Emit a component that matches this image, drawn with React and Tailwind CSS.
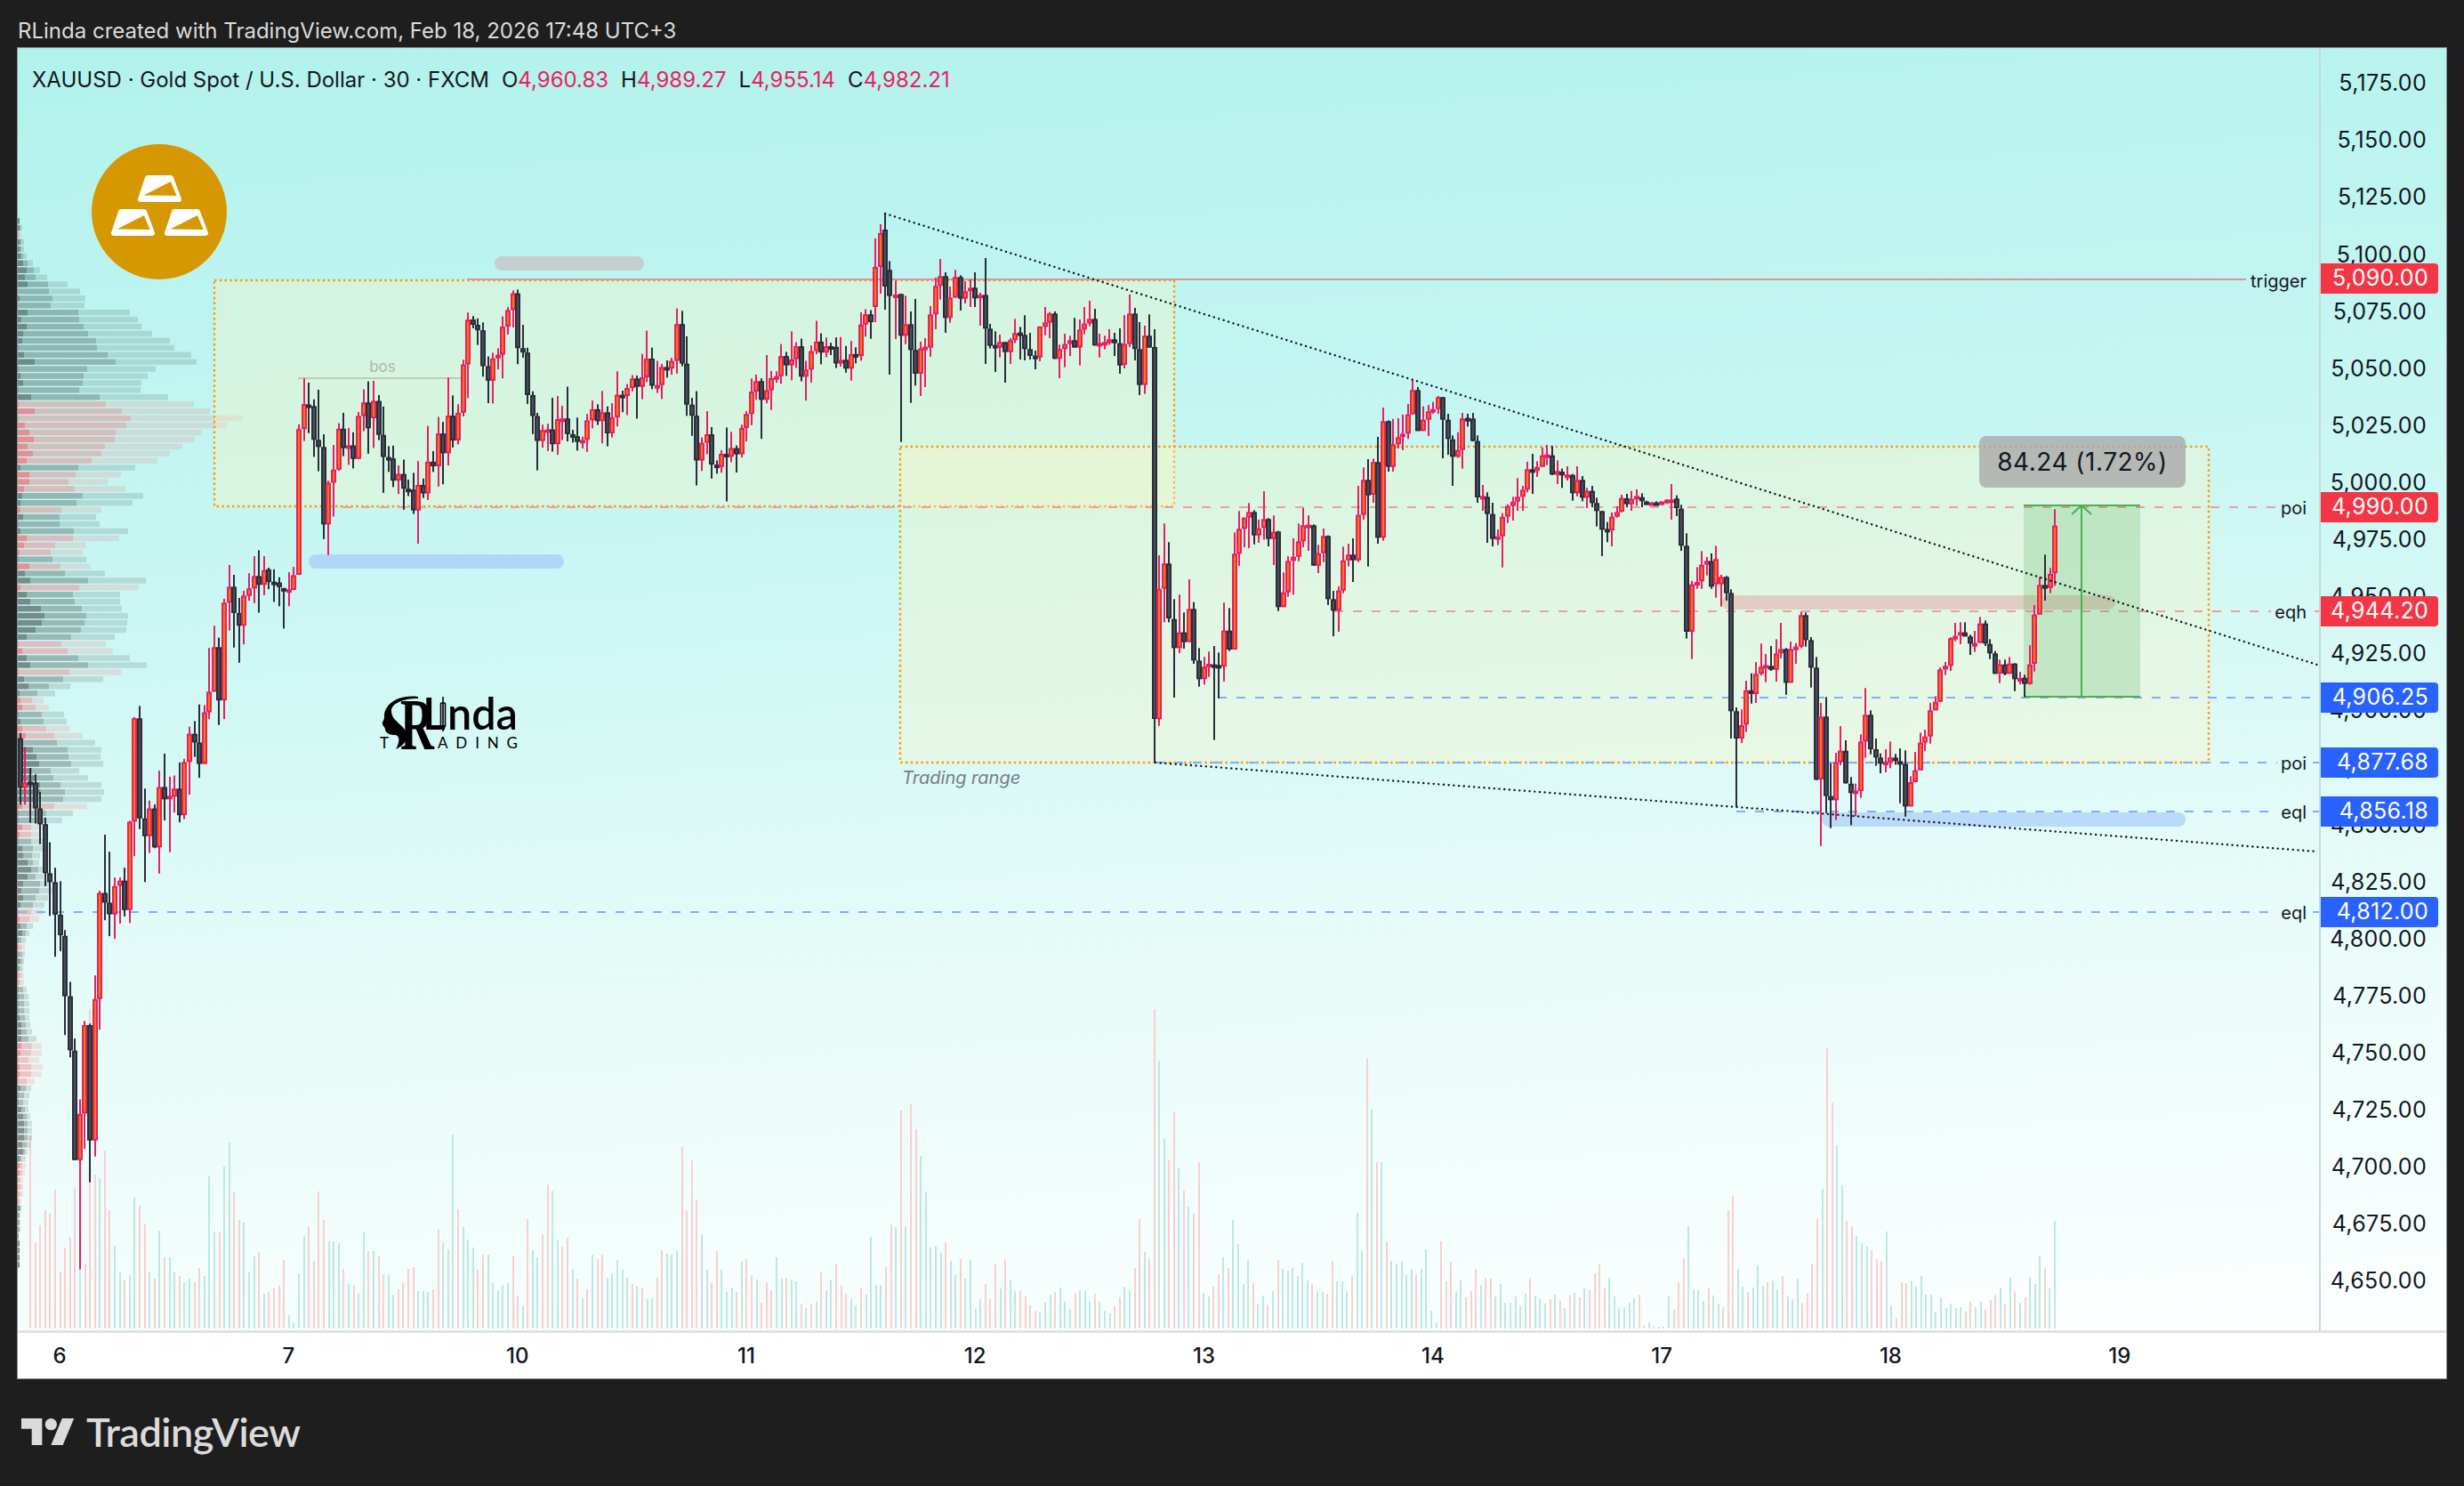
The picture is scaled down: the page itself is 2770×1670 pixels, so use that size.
const PRICE_LABELS = ['5,175.00','5,150.00','5,125.00','5,100.00','5,075.00','5,050.00','5,025.00','5,000.00','4,975.00','4,950.00','4,925.00','4,900.00','4,875.00','4,850.00','4,825.00','4,800.00','4,775.00','4,750.00','4,725.00','4,700.00','4,675.00','4,650.00']
const DAYS = ['6', '7', '10', '11', '12', '13', '14', '17', '18', '19']

const PRICE_TAGS = [
  { text: '5,090.00', cls: 'top-[242px] bg-[#f23645]' },
  { text: '4,990.00', cls: 'top-[499px] bg-[#f23645]' },
  { text: '4,944.20', cls: 'top-[616px] bg-[#f23645]' },
  { text: '4,906.25', cls: 'top-[713px] bg-[#2962ff]' },
  { text: '4,877.68', cls: 'top-[786px] bg-[#2962ff]' },
  { text: '4,856.18', cls: 'top-[841px] bg-[#2962ff]' },
  { text: '4,812.00', cls: 'top-[954px] bg-[#2962ff]' },
]

// volume profile rows: [dark end, mid end, light end, kind], read off at 3x
const PROFILE = [[66,66,66,'t'],[66,68,75,'t'],[60,65,72,'p'],[66,72,81,'t'],[66,72,81,'t'],[70,78,90,'t'],[78,93,111,'t'],[90,114,135,'t'],[84,120,159,'t'],[93,162,228,'t'],[60,165,270,'t'],[66,177,288,'t'],[60,171,285,'t'],[93,264,438,'t'],[72,267,465,'t'],[90,282,477,'t'],[78,297,513,'t'],[75,324,573,'t'],[62,327,588,'t'],[81,363,645,'t'],[117,390,663,'t'],[62,294,525,'t'],[69,282,498,'t'],[78,279,477,'t'],[62,267,474,'t'],[105,336,567,'t'],[62,357,654,'p'],[117,411,708,'p'],[62,441,819,'p'],[84,426,765,'p'],[99,390,681,'p'],[114,387,657,'p'],[93,354,615,'p'],[111,342,573,'p'],[90,309,531,'p'],[69,264,456,'t'],[99,255,408,'p'],[99,231,363,'p'],[81,252,423,'p'],[75,279,483,'t'],[69,258,447,'t'],[69,207,342,'p'],[78,201,324,'t'],[62,201,336,'t'],[69,249,432,'t'],[90,246,402,'p'],[81,186,291,'p'],[66,171,279,'p'],[62,177,291,'t'],[99,204,306,'p'],[84,219,354,'t'],[102,297,492,'t'],[69,267,468,'p'],[90,246,405,'t'],[102,252,405,'t'],[138,276,411,'t'],[150,291,432,'t'],[141,285,429,'t'],[120,273,426,'t'],[90,240,387,'t'],[62,207,357,'p'],[75,228,381,'p'],[90,264,438,'t'],[102,297,495,'t'],[62,234,411,'p'],[81,213,348,'t'],[96,165,237,'t'],[66,126,186,'t'],[69,108,147,'p'],[75,120,165,'p'],[62,141,216,'t'],[69,147,225,'t'],[75,156,234,'p'],[87,183,279,'p'],[78,192,321,'t'],[111,228,342,'t'],[123,231,339,'t'],[132,240,348,'t'],[108,171,267,'t'],[120,180,297,'t'],[135,204,342,'t'],[135,219,351,'t'],[120,213,342,'t'],[75,183,294,'p'],[62,156,246,'t'],[62,156,210,'t'],[75,105,150,'p'],[66,105,140,'p'],[62,105,150,'t'],[75,111,150,'t'],[78,108,135,'t'],[93,111,132,'t'],[105,129,150,'t'],[93,120,147,'t'],[78,135,165,'t'],[72,132,175,'t'],[78,120,162,'t'],[69,111,150,'t'],[62,105,144,'p'],[66,100,132,'p'],[69,90,111,'t'],[75,87,99,'t'],[62,72,87,'t'],[62,72,84,'p'],[62,75,84,'t'],[66,75,81,'t'],[62,69,78,'t'],[62,72,81,'p'],[62,69,81,'p'],[62,78,90,'t'],[62,81,96,'t'],[62,81,99,'t'],[62,81,99,'t'],[66,84,99,'t'],[72,87,102,'t'],[72,90,108,'t'],[72,96,123,'t'],[72,108,141,'p'],[69,105,141,'p'],[62,96,132,'p'],[66,105,144,'p'],[66,105,141,'p'],[62,90,117,'p'],[69,87,105,'t'],[62,81,99,'t'],[62,78,96,'t'],[72,84,96,'t'],[78,90,102,'t'],[81,93,108,'t'],[81,93,108,'t'],[81,93,108,'t'],[75,90,102,'t'],[78,84,93,'t'],[66,72,87,'t'],[66,75,87,'p'],[66,75,84,'p'],[62,70,78,'p'],[62,72,78,'p'],[62,70,78,'p'],[62,66,72,'p'],[66,70,72,'t'],[62,66,69,'t'],[62,66,69,'t'],[62,66,69,'t'],[62,63,63,'t'],[66,66,66,'t'],[66,66,66,'t'],[66,66,66,'t'],[66,66,66,'t']]

// volume tops as read from the two crops, zoom y then p(ink)/t(eal)
const VOL_LEFT = '470p 828p 771p 720p 732p 651p 927p 846p 813p 642p 915t 900p 44p 600p 612t 519p 720p 840t 930t 957p 939t 678t 705p 768p 927t 951p 789t 879p 879t 930t 942p 963t 951t 963p 915p 942t 606t 792t 795p 573t 492t 657p 753p 762t 930t 876t 861p 1002t 996p 984p 975p 888p 1074t 1101t 933t 807t 774p 891p 657p 753p 825t 825t 831t 918p 969t 972p 1002t 795t 858p 858t 876p 936p 939t 1005t 987p 966p 918p 912p 993t 993t 996t 987p 783p 831t 852t 465t 717p 777t 819t 846t 921p 870p 870t 966t 990t 972t 966t 873p 1008p 1041t 750p 855t 879t 801p 633p 654t 819t 843p 813p 918t 951p 1017t 987p 870t 885p 870p 948t 933t 888t 921t 948t 969p 975t 981p 1020t 1017t 948p 855p 867t 870t 858t 507p 723p 552p 687p 804t 921t 966p 858p 921t 996t 981t 996p 894t 885p 939p 954t 1032p 963p 990p 879t 951t 948p 954t 960t 1035p 1050t 1038p 1029t 930p 990t 954t 900p 975p 1002p 1020t 1041t 981p 1005t 810t 972t 972t 912p 768p 777t 384p 774t 363p 447p 537t 657t 846t 840t 864t 828p 891t 939t 885p 951t 888t 1053t 1020t 969p 1020p 903p 984t 885p 954t 993t 993p 1011p 1041p 1059p 1065t 1032t 1005t 996p 981t 1029t 1053t 1002p 990t 993t 1029t 1002p 1029t 1059t 1068t 1044p 1014p 978t 990t 915p 750p 861t 885p 42p'.split(' ')
const VOL_RIGHT = '216t 477t 552p 387p 576t 654p 708t 732p 558p 999t 1011t 978p 936p 879t 915p 753t 834t 969t 891t 966p 1038t 1008t 1041p 993t 888p 918t 924t 915t 942t 897t 954t 969p 993t 996t 1002p 891p 960t 960t 993t 942p 729t 855t 207p 378t 558p 558t 825p 891t 900t 894t 939t 918t 936p 918t 852t 1059t 1101t 825p 960p 894p 993t 954t 1014p 993p 918p 972t 948p 951p 1011t 969t 1032t 1032t 1011t 1041t 1002t 951p 1008t 1020t 1035t 1020p 1005t 1026p 1050t 1005p 999t 1014p 984t 990p 933p 903p 984p 948t 1011t 1050t 1047t 1032t 1017t 1005p 1110p 1098t 1113p 1113t 1113t 1008t 1056p 963p 882p 774t 987t 990t 1026t 984p 1008t 1035t 1047p 720p 672p 918t 978t 996p 981t 906t 975t 963p 957t 987t 942p 1011t 1020t 951t 1032p 999p 903p 750p 648t 174p 357p 501t 636t 756p 774p 807t 831t 843t 855p 885p 891p 792t 1041t 1083p 963p 966p 960t 978t 942t 1005t 1005t 1062t 1014t 1050t 1035t 1050t 1047t 1062p 1029p 1047t 1029t 1056p 1023p 1005p 981t 1038p 948t 993p 1032t 1014p 945t 969t 873t 915p 984t 756t'.split(' ')

const spread = (list, from, to) =>
  list.map((v, i) => ({
    x: from + ((to - from) * i) / (list.length - 1),
    top: 1120 + parseInt(v) / 3,
    pink: v.endsWith('p'),
  }))
const VOLUMES = [...spread(VOL_LEFT, 34, 1298), ...spread(VOL_RIGHT, 1303, 2310)]

// candle rows in crop coordinates: x, wick top, body top, body bottom, wick bottom, up
const CROPS = [
  { x0: 0, y0: 0, sx: 1, sy: 1, rows: [[984,268,300,345,362,1],[990,252,262,300,330,1],[995,240,258,322,348,0]] },
  { x0: 0, y0: 230, sx: 3, sy: 2.24, rows: [[69,1330,1343,1468,1510,0],[84,1365,1455,1468,1510,1],[102,1418,1452,1455,1556,0],[120,1434,1455,1520,1558,0],[136,1478,1520,1560,1610,0]] },
  { x0: 0, y0: 900, sx: 3, sy: 2.9, rows: [[152,55,76,236,278,0],[168,135,236,265,375,0],[186,218,265,371,508,0],[203,262,371,438,490,0],[220,421,440,637,763,0],[237,590,637,813,836,0],[253,775,814,1171,1171,0],[270,973,1020,1171,1527,1],[286,717,731,1019,1135,1],[303,726,731,1107,1243,0],[320,569,646,1107,1159,1],[337,293,300,646,746,1],[354,110,300,332,389,0],[369,166,332,370,441,0],[387,250,278,370,450,1],[405,250,260,277,400,1],[421,218,260,356,377,0],[438,65,68,356,398,1]] },
  { x0: 0, y0: 230, sx: 3, sy: 2.24, rows: [[453,1290,1293,1553,1640,1],[471,1262,1293,1545,1572,0],[488,1470,1545,1590,1705,0],[505,1500,1520,1590,1632,1],[522,1510,1520,1618,1620,0],[538,1425,1466,1618,1684,1],[555,1382,1466,1497,1550,0],[573,1440,1488,1497,1630,1],[588,1437,1470,1490,1530,1],[605,1404,1470,1537,1555,0],[622,1395,1403,1537,1547,1],[639,1314,1332,1403,1485,1],[656,1300,1332,1354,1390,0],[673,1258,1354,1408,1443,0],[690,1260,1278,1408,1408,1],[706,1116,1226,1278,1295,1],[723,1060,1114,1226,1226,1],[738,1090,1114,1248,1310,0],[756,992,1002,1248,1295,1],[774,907,962,1002,1072,1],[790,932,962,1028,1115,0],[807,990,1028,1060,1153,0],[823,972,984,1060,1107,1],[840,928,966,985,997,1],[857,885,935,966,1003,1],[873,870,935,957,1027,0],[890,885,920,957,983,1],[906,914,918,950,968,0],[923,918,949,950,1000,0],[941,938,951,963,1011,0],[957,965,965,970,1067,0],[975,925,968,970,1011,1],[990,912,933,970,970,1],[1008,553,565,932,932,1],[1026,437,502,565,595,1],[1041,448,503,505,575,0],[1059,490,507,592,635,0],[1074,466,592,610,671,0],[1091,578,610,805,842,0],[1107,695,700,805,882,1],[1125,605,667,700,785,1],[1142,550,564,667,670,1],[1158,524,564,613,633,0],[1175,562,606,612,655,1],[1191,573,606,640,664,0],[1208,522,532,640,640,1],[1226,465,498,532,570,1],[1242,445,498,563,627,0]] },
  { x0: 1000, y0: 220, sx: 2.613, sy: 3, rows: [[1,220,250,338,603,0],[18,286,333,336,483,1],[34,331,331,472,830,0],[48,337,433,472,500,1],[62,390,433,520,698,0],[77,348,520,600,640,0],[92,492,515,600,675,1],[105,480,509,512,645,1],[120,372,400,512,543,1],[135,276,304,400,450,1],[149,213,271,304,350,1],[164,258,271,412,462,0],[178,306,343,412,428,1],[193,250,274,343,345,1],[208,268,274,347,387,0],[222,288,322,347,363,1],[237,282,310,322,375,1],[251,258,310,346,375,0],[266,327,334,346,438,1],[282,210,334,448,567,0],[296,432,448,506,515,0],[310,457,503,505,594,0],[325,468,493,512,545,1],[339,493,493,527,630,0],[355,480,487,527,567,1],[369,415,463,487,497,1],[383,442,461,463,552,0],[398,403,469,517,555,0],[412,462,517,540,552,0],[428,522,539,541,585,0],[442,440,441,545,558,1],[457,375,427,442,470,1],[471,392,397,428,480,1],[486,390,397,550,550,0],[500,502,517,550,615,1],[515,465,500,517,578,1],[530,472,487,500,540,1],[544,412,487,512,512,0],[559,417,451,512,572,1],[573,375,431,451,467,1],[588,354,415,431,440,1],[603,381,415,505,505,0],[617,465,496,498,545,1],[632,472,493,495,518,1],[646,450,484,497,503,1],[661,462,484,497,540,0],[676,447,497,572,600,0],[691,402,500,570,582,1],[705,333,397,500,510,1],[720,378,397,517,555,0],[735,426,517,638,672,0],[750,438,472,638,668,1],[764,400,472,512,512,0],[779,450,510,1764,1911,0]] },
  { x0: 1290, y0: 420, sx: 2.45, sy: 3, rows: [[33,612,725,1165,1187,1],[46,505,640,725,838,1],[59,568,640,825,838,0],[73,760,827,925,1092,0],[88,745,872,925,942,1],[101,805,872,905,927,0],[115,693,793,905,905,1],[128,770,793,967,978,0],[142,925,967,1030,1055,0],[156,955,988,1030,1048,1],[169,937,978,982,1022,1],[183,918,980,984,1235,0],[197,940,982,986,1095,0],[210,772,866,988,1038,1],[225,790,866,930,935,0],[239,535,607,930,930,1],[252,463,523,607,648,1],[266,485,485,523,585,1],[279,436,466,485,588,1],[293,460,466,545,575,0],[307,492,521,545,570,1],[320,396,490,520,560,1],[334,487,490,557,582,0],[348,478,533,557,645,1],[361,530,532,787,800,0],[375,670,737,787,787,1],[388,615,631,737,752,1],[402,555,617,631,745,1],[416,505,565,617,632,1],[429,453,511,565,585,1],[443,478,509,512,597,1],[457,508,511,647,647,0],[471,577,605,647,672,1],[485,522,547,605,635,1],[498,545,547,760,780,0],[512,732,760,799,885,0],[526,717,731,799,870,1],[540,583,629,731,740,1],[553,573,610,629,650,1],[566,555,610,629,702,0],[580,378,476,629,635,1],[595,316,358,476,492,1],[608,288,358,410,650,0],[622,286,298,408,435,1],[635,213,298,553,573,0],[650,114,160,553,563,1],[664,157,160,314,330,0],[677,152,238,314,330,1],[690,150,214,238,252,1],[704,138,202,214,258,1],[718,102,137,202,220,1],[731,18,55,137,137,1],[745,45,55,193,193,0],[759,110,155,193,193,1],[773,105,127,155,210,1],[786,95,119,122,135,1],[800,75,79,119,135,1],[813,78,79,155,285,0],[828,135,155,220,273,0],[841,208,221,280,378,0],[855,197,257,280,283,1],[868,132,151,257,320,1],[882,135,149,152,178,0],[896,132,151,227,228,0],[910,208,227,417,435,0],[923,375,412,416,462,1],[937,400,415,473,570,0],[951,435,473,557,582,0],[965,525,548,557,578,1],[978,470,482,548,653,1],[992,440,446,482,503,1],[1006,415,431,446,495,1],[1019,352,415,431,462,1],[1033,378,391,415,462,1],[1047,297,322,391,400,1],[1060,270,322,328,405,0],[1074,295,314,328,348,1],[1087,248,275,314,314,1],[1101,240,272,275,308,1],[1115,243,275,340,342,0],[1129,292,328,341,372,1],[1142,320,330,343,385,0],[1156,312,340,341,360,1],[1170,338,341,403,428,0],[1183,312,358,403,413,1],[1197,345,358,418,430,0],[1210,385,395,418,453,1],[1224,378,395,436,450,0],[1238,418,436,463,515,0],[1251,462,463,526,615,0],[1266,500,523,526,568,0],[1279,468,482,528,582,1],[1293,447,466,482,485,1],[1306,408,419,465,468,1],[1320,405,420,440,450,0],[1334,395,422,440,462,1],[1348,390,412,415,445,1],[1361,403,416,430,450,0],[1375,428,431,437,441,0],[1389,432,434,436,444,1],[1402,430,434,437,437,0],[1416,430,431,433,433,1],[1430,423,425,428,438,1],[1443,372,424,426,492,1],[1457,410,421,453,480,0],[1471,442,455,580,597,0],[1484,538,580,870,893,0],[1499,698,710,870,962,1],[1513,652,702,710,725,1],[1526,598,644,700,725,1],[1540,618,631,644,680,1],[1553,606,632,718,725,0],[1566,580,625,710,755,1]] },
  { x0: 1800, y0: 640, sx: 3, sy: 3, rows: [[405,18,25,50,125,1],[422,22,25,80,105,0],[439,67,79,478,570,0],[456,465,478,570,800,0],[474,472,525,570,585,1],[490,375,407,523,548,1],[507,350,407,420,452,0],[522,312,352,420,450,1],[540,250,328,352,357,1],[556,285,322,325,380,1],[573,258,325,338,342,0],[590,235,283,338,378,1],[606,180,268,283,300,1],[624,265,268,382,422,0],[640,243,268,382,382,1],[657,248,260,268,318,1],[674,142,154,260,265,1],[691,145,154,238,260,0],[708,228,238,331,398,0],[725,295,331,709,710,0],[741,450,496,708,932,1],[759,430,496,764,822,0],[774,654,764,778,872,0],[792,618,650,778,845,1],[807,528,611,650,660,1],[825,576,611,721,722,0],[843,700,722,754,862,0],[858,722,745,747,832,1],[875,556,580,747,770,1],[891,400,490,580,635,1],[909,475,490,606,623,0],[926,570,606,634,662,0],[942,620,634,655,687,0],[960,606,648,650,684,1],[975,580,634,650,670,1],[992,622,634,646,658,0],[1008,603,646,654,788,0],[1025,610,655,799,833,0],[1043,697,717,799,799,1],[1060,615,677,717,717,1],[1077,550,584,677,677,1],[1092,540,563,584,612,1],[1110,450,475,563,587,1],[1127,427,446,475,475,1],[1144,330,337,446,446,1],[1160,312,325,337,356,1],[1178,228,232,325,342,1],[1193,180,224,233,242,1],[1211,178,211,223,252,1],[1228,178,212,226,226,0],[1245,220,226,250,288,0],[1260,207,248,250,278,1],[1278,160,182,248,248,1],[1296,172,182,250,258,0],[1312,235,251,283,302,0],[1329,275,283,352,352,0],[1345,304,320,351,383,1],[1362,304,320,352,357,0],[1378,295,317,352,352,1],[1395,316,317,370,410,0],[1412,345,366,369,387,1],[1428,355,365,386,430,0],[1445,255,320,386,388,1],[1462,120,152,318,344,1],[1479,25,52,152,152,1]] },
  { x0: 2200, y0: 450, sx: 2.75, sy: 3, rows: [[272,520,622,635,675,0],[288,565,585,632,650,1],[302,367,422,583,625,1]] },
]

// stretch 420-980 follows the price path only, with seeded wobble
const PATH = [[420,470],[433,512],[463,565],[486,512],[512,477],[526,362],[548,415],[574,336],[592,440],[610,503],[645,477],[680,477],[707,415],[742,424],[760,371],[781,495],[813,521],[848,450],[892,406],[927,397],[954,406],[980,345]]

function pathY(x) {
  for (let i = 1; i < PATH.length; i++) {
    if (x <= PATH[i][0]) {
      const [x1, y1] = PATH[i - 1]
      const [x2, y2] = PATH[i]
      return y1 + ((y2 - y1) * (x - x1)) / (x2 - x1)
    }
  }
  return PATH[PATH.length - 1][1]
}

function buildCandles() {
  const out = []
  CROPS.forEach((c) => {
    c.rows.forEach(([x, wt, bt, bb, wb, up]) => {
      out.push({
        x: Math.round(c.x0 + x / c.sx),
        wt: c.y0 + wt / c.sy,
        bt: c.y0 + bt / c.sy,
        bb: c.y0 + bb / c.sy,
        wb: c.y0 + wb / c.sy,
        up: !!up,
      })
    })
  })
  let seed = 4711
  const rnd = () => {
    seed = (seed * 16807) % 2147483647
    return seed / 2147483647
  }
  let prev = pathY(420)
  for (let x = 420; x < 980; x += 5.59) {
    const close = pathY(x) + (rnd() - 0.5) * 42
    const bt = Math.min(prev, close)
    const bb = Math.max(prev, close)
    out.push({
      x: Math.round(x),
      wt: bt - 3 - rnd() * rnd() * 44,
      bt,
      bb: Math.max(bb, bt + 3),
      wb: bb + 3 + rnd() * rnd() * 50,
      up: close < prev,
    })
    prev = close
  }
  return out
}

const CANDLES = buildCandles()

function Candle({ c }) {
  const edge = c.up ? '#e91e63' : '#2a2e39'
  const fill = c.up ? '#f57c00' : '#4a4e5a'
  const h = Math.max(c.bb - c.bt, 4)
  return (
    <g>
      <rect x={c.x - 1} y={c.wt} width="2" height={c.wb - c.wt} fill={edge} />
      <rect x={c.x - 3} y={c.bt} width="6" height={h} fill={edge} />
      <rect x={c.x - 1} y={c.bt + 2} width="2" height={Math.max(h - 4, 0)} fill={fill} />
    </g>
  )
}

function Dashed({ y, from, to, color }) {
  return <line x1={from} x2={to} y1={y} y2={y} stroke={color} strokeWidth="2" strokeDasharray="10 11" />
}

function Note({ x, y, children }) {
  return (
    <text x={x} y={y} textAnchor="end" fontSize="20" fill="#131722" fontFamily="Inter, sans-serif">
      {children}
    </text>
  )
}

function GoldBar({ x, y }) {
  return (
    <g transform={`translate(${x} ${y})`}>
      <path d="M11 3H37L46 27H3Z" fill="#fff" stroke="#fff" strokeWidth="6" strokeLinejoin="round" />
      <path d="M6.6 22.5L37 7L43.6 23Z" fill="#d59800" />
    </g>
  )
}

function Chart() {
  const pitch = (1421 - 248) / (PROFILE.length - 1)
  return (
    <svg className="absolute inset-0" width="2587" height="1441" viewBox="20 54 2587 1441">
      {VOLUMES.map((v, i) => (
        <rect key={i} x={Math.round(v.x) - 1} y={v.top} width="2" height={1493 - v.top} fill={v.pink ? '#f9cfcf' : '#bfe7e2'} />
      ))}

      {PROFILE.map(([d, m, l, kind], i) => {
        const y = 248 + i * pitch - 3
        const pink = kind === 'p'
        return (
          <g key={i}>
            <rect x="20" y={y} width={l / 3 - 20} height="6.4" fill={pink ? 'rgb(255 100 100 / 0.17)' : 'rgb(40 50 50 / 0.14)'} />
            <rect x="20" y={y} width={m / 3 - 20} height="6.4" fill={pink ? 'rgb(255 70 80 / 0.2)' : 'rgb(40 50 50 / 0.2)'} />
            <rect x="20" y={y} width={d / 3 - 20} height="6.4" fill={pink ? 'rgb(255 70 90 / 0.4)' : 'rgb(40 50 50 / 0.32)'} />
          </g>
        )
      })}

      <rect x="556" y="288" width="168" height="16" rx="8" fill="#c6cfcf" />
      <rect x="347" y="623" width="287" height="16" rx="8" fill="#aed8f5" />

      <rect x="241" y="315" width="1079" height="254" fill="rgb(255 247 194 / 0.33)" stroke="#ff9800" strokeWidth="2.4" strokeDasharray="2.4 3.4" />
      <rect x="1012" y="502" width="1471" height="355" fill="rgb(255 247 194 / 0.33)" stroke="#ff9800" strokeWidth="2.4" strokeDasharray="2.4 3.4" />

      <line x1="525" x2="2525" y1="314" y2="314" stroke="#d8959a" strokeWidth="2" />
      <Dashed y={570} from={385} to={2560} color="#e9a19f" />
      <Dashed y={687} from={1500} to={2553} color="#e9a19f" />
      <line x1="2602" x2="2607" y1="687" y2="687" stroke="#e9a19f" strokeWidth="2" />
      <Dashed y={784} from={1369} to={2607} color="#82aeff" />
      <Dashed y={857} from={1299} to={2560} color="#82aeff" />
      <line x1="2600" x2="2607" y1="857" y2="857" stroke="#82aeff" strokeWidth="2" />
      <Dashed y={912} from={1952} to={2560} color="#82aeff" />
      <line x1="2600" x2="2607" y1="912" y2="912" stroke="#82aeff" strokeWidth="2" />
      <Dashed y={1025} from={20} to={2560} color="#82aeff" />
      <line x1="2600" x2="2607" y1="1025" y2="1025" stroke="#82aeff" strokeWidth="2" />

      <rect x="1936" y="669" width="442" height="16" rx="8" fill="rgb(225 195 185 / 0.8)" />
      <rect x="2048" y="913" width="409" height="16" rx="8" fill="#b9daf8" />

      <line x1="335" x2="521" y1="425" y2="425" stroke="#c4cabb" strokeWidth="2" />
      <text x="430" y="418" textAnchor="middle" fontSize="17" fill="#b0b3a8" fontFamily="Inter, sans-serif">bos</text>

      <rect x="2275" y="568" width="131" height="215" fill="rgb(76 175 80 / 0.22)" />
      <line x1="2275" x2="2406" y1="568" y2="568" stroke="#4caf50" strokeWidth="2" />
      <line x1="2275" x2="2406" y1="783" y2="783" stroke="#4caf50" strokeWidth="2" />
      <line x1="2340" x2="2340" y1="783" y2="568" stroke="#4caf50" strokeWidth="2" />
      <path d="M2329 578L2340 568L2351 578" fill="none" stroke="#4caf50" strokeWidth="2" />

      {CANDLES.map((c, i) => (
        <Candle key={i} c={c} />
      ))}

      <line x1="995" y1="240" x2="2605" y2="747" stroke="#131722" strokeWidth="2.4" strokeLinecap="round" strokeDasharray="0.1 5.6" />
      <line x1="1299" y1="857" x2="2605" y2="957" stroke="#131722" strokeWidth="2.4" strokeLinecap="round" strokeDasharray="0.1 5.6" />

      <rect x="2225" y="490" width="232" height="58" rx="8" fill="rgb(170 170 170 / 0.8)" />
      <text x="2341" y="529" textAnchor="middle" fontSize="28" letterSpacing="0.5" fill="#131722" fontFamily="Inter, sans-serif">84.24 (1.72%)</text>

      <text x="1014" y="881" fontSize="20" fontStyle="italic" fill="#787b86" fontFamily="Inter, sans-serif">Trading range</text>

      <Note x={2593} y={323}>trigger</Note>
      <Note x={2593} y={578}>poi</Note>
      <Note x={2593} y={695}>eqh</Note>
      <Note x={2593} y={865}>poi</Note>
      <Note x={2593} y={920}>eql</Note>
      <Note x={2593} y={1033}>eql</Note>

      {/* badge */}
      <circle cx="179" cy="238" r="76" fill="#d59800" />
      <GoldBar x={155} y={197} />
      <GoldBar x={125} y={235} />
      <GoldBar x={185} y={235} />

      {/* RLinda logo */}
      <path d="M470 783C446 780 431 793 432 806C432 810 429 811 430 814C431 817 433 817 433 820C434 825 440 826 445 826C450 828 449 835 445 842C453 838 459 832 457 824C454 814 441 811 440 800C439 791 452 785 470 785Z" fill="#000" />
      <text x="450" y="842" fontSize="82" fontWeight="700" fontFamily="'Liberation Serif', serif" textLength="38" lengthAdjust="spacingAndGlyphs" fill="#000">R</text>
      <text x="475" y="820" fontSize="50" fontWeight="600" fontFamily="Lato, sans-serif" fill="#000">L</text>
      <rect x="495.5" y="790" width="5" height="27" rx="1" fill="none" stroke="#000" strokeWidth="1.6" />
      <line x1="498" x2="498" y1="783" y2="822" stroke="#000" strokeWidth="1.6" />
      <text x="503" y="820" fontSize="50" fontWeight="600" fontFamily="Lato, sans-serif" textLength="79" lengthAdjust="spacingAndGlyphs" fill="#000">nda</text>
      <text x="427" y="841" fontSize="17" fontFamily="Lato, sans-serif" fill="#000">T</text>
      <text x="492" y="841" fontSize="17" fontFamily="Lato, sans-serif" textLength="90" fill="#000">ADING</text>
    </svg>
  )
}

function Legend() {
  return (
    <div className="absolute left-[16px] top-[23px] flex text-[24px] leading-[26px] text-[#131722] whitespace-nowrap">
      <span>XAUUSD · Gold Spot / U.S. Dollar · 30 · FXCM</span>
      <span className="ml-[14px]">O<span className="text-[#e91e63]">4,960.83</span></span>
      <span className="ml-[14px]">H<span className="text-[#e91e63]">4,989.27</span></span>
      <span className="ml-[14px]">L<span className="text-[#e91e63]">4,955.14</span></span>
      <span className="ml-[14px]">C<span className="text-[#e91e63]">4,982.21</span></span>
    </div>
  )
}

function PriceAxis() {
  return (
    <div className="relative w-[142px] border-l-2 border-[#c5dad9] pt-[8px]">
      {PRICE_LABELS.map((p) => (
        <div key={p} className="h-[64.1px] flex items-center justify-end pr-[21px] text-[25px] tracking-[0.3px] text-[#131722]">
          {p}
        </div>
      ))}
      {PRICE_TAGS.map((t) => (
        <div key={t.text} className={`absolute left-0 w-[132px] h-[34px] rounded-r-[4px] flex items-center justify-end pr-[11px] text-[25px] tracking-[0.3px] text-white ${t.cls}`}>
          {t.text}
        </div>
      ))}
    </div>
  )
}

export default function App() {
  return (
    <div className="w-[2770px] h-[1670px] bg-[#1e1e1e] flex flex-col font-['Inter',sans-serif] overflow-hidden">
      <div className="h-[54px] pl-[20px] pt-[21px] text-[24px] leading-[28px] text-[#dbdbdb] whitespace-nowrap">
        RLinda created with TradingView.com, Feb 18, 2026 17:48 UTC+3
      </div>
      <div className="ml-[20px] w-[2730px] h-[1495px] flex flex-col shadow-[0_0_0_1px_#8a8f8f]">
        <div className="h-[1441px] flex bg-[linear-gradient(176deg,#b2f2ec_0%,#c6f6f2_35%,#e4fbf8_65%,#fdffff_100%)]">
          <div className="relative w-[2587px]">
            <Chart />
            <Legend />
          </div>
          <PriceAxis />
        </div>
        <div className="h-[54px] bg-white border-t-[3px] border-[#e0e3e3] flex items-center">
          <div className="flex ml-[-81.6px] text-[24px] font-medium text-[#131722]">
            {DAYS.map((d) => (
              <span key={d} className="w-[257.3px] text-center">{d}</span>
            ))}
          </div>
        </div>
      </div>
      <div className="flex items-center pl-[24px] pt-[36px]">
        <svg width="60" height="30" viewBox="0 4 36 18" fill="#dbdbdb">
          <path d="M14 22H7V11H0V4h14v18zM28 22h-8l7.5-18h8L28 22z" />
          <circle cx="20" cy="8" r="4" />
        </svg>
        <span className="ml-[13px] text-[45px] leading-[48px] font-semibold tracking-[-0.5px] text-[#dbdbdb] font-['Lato',sans-serif]">TradingView</span>
      </div>
    </div>
  )
}
